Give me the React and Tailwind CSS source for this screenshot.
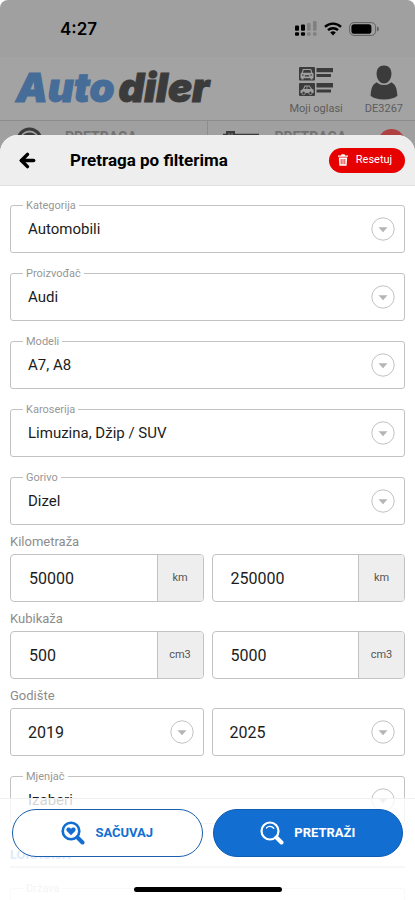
import { ArrowLeft } from "lucide-react";

const filters = [
  { id: "kategorija", label: "Kategorija", value: "Automobili" },
  { id: "proizvodjac", label: "Proizvođač", value: "Audi" },
  { id: "modeli", label: "Modeli", value: "A7, A8" },
  { id: "karoserija", label: "Karoserija", value: "Limuzina, Džip / SUV" },
  { id: "gorivo", label: "Gorivo", value: "Dizel" }
];

const ranges = [
  { id: "kilometraza", label: "Kilometraža", from: "50000", to: "250000", unit: "km" },
  { id: "kubikaza", label: "Kubikaža", from: "500", to: "5000", unit: "cm3" }
];

function StatusBar() {
  return (
    <div className="flex h-[57px] shrink-0 items-center justify-between pl-[60px] pr-9">
      <span className="font-['Inter',sans-serif] text-[17px] font-semibold leading-5 text-black">4:27</span>
      <div className="flex items-center gap-[7px]">
        <svg width="22" height="15" viewBox="0 0 22 15">
          <g fill="#000">
            <rect x="0" y="4.5" width="4" height="5.3" rx="1" />
            <rect x="6" y="3.5" width="4" height="6.3" rx="1" />
            <rect x="0" y="11.2" width="4" height="3.6" rx="1" />
            <rect x="6" y="11.2" width="4" height="3.6" rx="1" />
          </g>
          <g fill="#808080">
            <rect x="12" y="2" width="3.6" height="7.8" rx="1" />
            <rect x="18" y="0" width="3.6" height="9.8" rx="1" />
            <rect x="12" y="11.2" width="3.6" height="3.6" rx="1" />
            <rect x="18" y="11.2" width="3.6" height="3.6" rx="1" />
          </g>
        </svg>
        <svg width="18" height="14" viewBox="0 0 18 14" fill="none" stroke="#000" strokeWidth="2.4">
          <path d="M1 4.9a11.4 11.4 0 0 1 16 0" />
          <path d="M4 8.2a7.2 7.2 0 0 1 10 0" />
          <path d="M9 13.4 6.2 10.5a4 4 0 0 1 5.6 0z" fill="#000" stroke="none" />
        </svg>
        <svg width="30" height="14" viewBox="0 0 30 14">
          <rect x=".6" y=".6" width="26" height="12.8" rx="4.2" fill="none" stroke="#606060" />
          <rect x="2.4" y="2.3" width="20" height="9.4" rx="2.8" fill="#000" />
          <path d="M28 4.6c1.4.6 1.9 1.4 1.9 2.4s-.5 1.8-1.9 2.4z" fill="#606060" />
        </svg>
      </div>
    </div>
  );
}

function AdsIcon() {
  return (
    <svg width="36" height="30" viewBox="0 0 36 30">
      <g fill="#3b3b3b">
        <rect x="1" y="0" width="16" height="13.5" rx="1" />
        <rect x="1" y="16" width="16" height="13" rx="1" />
        <rect x="18.5" y="1" width="16.5" height="4.2" />
        <rect x="18.5" y="7" width="14.5" height="3" />
        <rect x="18.5" y="16" width="16.5" height="4.5" />
        <rect x="18.5" y="22.5" width="14.5" height="3" />
      </g>
      <path
        d="M4.900 2h8.200l1.300 3.700 1.100.9v4.600h-1v1.300h-2v-1.300h-7v1.300h-2v-1.300h-1V6.600l1.100-.9z"
        fill="#a0a0a0"
      />
      <g fill="#3b3b3b">
        <path d="M5.700 3h6.600l.9 2.700H4.800z" />
        <circle cx="4.900" cy="8" r=".8" />
        <circle cx="13.100" cy="8" r=".8" />
        <rect x="6.800" y="8.200" width="4.400" height="1.300" />
      </g>
      <path d="M2.500 23.400 5 22l1.700-3.600h4.800l2.400 3.400 1.700.9v3.300H2.500z" fill="#a0a0a0" />
      <g fill="#3b3b3b">
        <path d="M6.200 21.900 7.400 19.400h1.200v2.500zM9.400 19.400h1.700l1.600 2.500H9.400z" />
        <circle cx="5.600" cy="26" r="1.700" stroke="#a0a0a0" strokeWidth=".8" />
        <circle cx="12.400" cy="26" r="1.700" stroke="#a0a0a0" strokeWidth=".8" />
      </g>
    </svg>
  );
}

function UserIcon() {
  return (
    <svg width="28" height="35" viewBox="0 0 28 35" fill="#3b3b3b">
      <path d="M14 .5c4.600 0 7.400 3 7.400 8 0 5.500-3 10-7.400 10s-7.400-4.500-7.400-10c0-5 2.800-8 7.400-8z" />
      <path d="M7 17.200c1.900 1.700 4.200 2.500 7 2.500s5.100-.8 7-2.500c4 1.600 6 5.300 6.400 13.500C24.500 33.200 19.800 34.400 14 34.400S3.500 33.200.6 30.700C1 22.500 3 18.800 7 17.200z" />
      <path d="M6.800 16.600c1.700 2 4.200 3 7.200 3s5.500-1 7.200-3" fill="none" stroke="#a3a3a3" strokeWidth=".8" />
    </svg>
  );
}

function SiteHeader() {
  return (
    <header className="flex h-16 shrink-0 items-start justify-between border-b border-[#8d8d8d] bg-[#a3a3a3] pl-4 pr-3">
      <a href="#home" className="mt-[11px] flex gap-1 font-['Inter',sans-serif] text-[40px] font-black italic leading-10">
        <span className="text-[#466c98] [-webkit-text-stroke:1px_#466c98]">Auto</span>
        <span className="text-[#3b3b3b] [-webkit-text-stroke:1px_#3b3b3b]">diler</span>
      </a>
      <nav className="flex gap-[22px] font-['Roboto',sans-serif] text-[11px] leading-4 text-[#5c5c5c]">
        <a href="#oglasi" className="flex flex-col items-center pt-2.5">
          <AdsIcon />
          <span className="mt-1">Moji oglasi</span>
        </a>
        <a href="#profil" className="flex flex-col items-center pt-2">
          <UserIcon />
          <span className="mt-px">DE3267</span>
        </a>
      </nav>
    </header>
  );
}

function SearchTabs() {
  return (
    <div className="grid h-10 shrink-0 grid-cols-2 bg-[#a0a0a0] font-['Roboto',sans-serif] text-[14px] font-bold leading-5 text-[#727272]">
      <div className="flex items-start gap-[22px] border-r border-[#8d8d8d] pl-4 pt-1.5">
        <svg width="27" height="27" viewBox="0 0 27 27" fill="none" stroke="#3b3b3b">
          <circle cx="13.500" cy="13.500" r="11.500" strokeWidth="3" />
          <path d="M7 10a8 8 0 0 1 13 0" strokeWidth="2.500" />
        </svg>
        <span>PRETRAGA</span>
      </div>
      <div className="flex items-start pl-[15px] pr-2.5 pt-1.5">
        <svg className="mt-1" width="36" height="12" viewBox="0 0 36 12">
          <path d="M0 3.500h36" stroke="#3b3b3b" strokeWidth="1.500" />
          <rect x="3" y="0" width="9" height="8" fill="#3b3b3b" />
          <path d="M6 2v5M9 2v5" stroke="#888" />
        </svg>
        <span className="ml-4">PRETRAGA</span>
        <span className="ml-auto mt-0.5 size-[27px] rounded-full bg-[#b04142]" />
      </div>
    </div>
  );
}

function DropArrow() {
  return (
    <svg className="pointer-events-none absolute right-[9px] top-1/2 -translate-y-1/2" width="24" height="24" viewBox="0 0 24 24">
      <circle cx="12" cy="12" r="11.200" fill="none" stroke="#c2c2c2" />
      <path d="M7.500 10.300h9L12 15.300z" fill="#b5b5b5" />
    </svg>
  );
}

function SelectBox({ id, value, label, ariaLabel }) {
  return (
    <div className={`relative h-12 rounded-[3px] border border-[#c2c2c2] ${label ? "text-[15px]" : "text-base"}`}>
      {label ? (
        <label htmlFor={id} className="absolute -top-2 left-3 bg-white px-[3px] text-[11px] leading-4 text-[#979797]">
          {label}
        </label>
      ) : null}
      <select
        id={id}
        aria-label={ariaLabel}
        className="size-full appearance-none bg-transparent pl-[17px] pr-10 pt-px text-[#1c1c1c] outline-none"
      >
        <option>{value}</option>
      </select>
      <DropArrow />
    </div>
  );
}

function UnitInput({ label, value, unit }) {
  return (
    <div className="flex h-12 min-w-0 overflow-hidden rounded-[4px] border border-[#c2c2c2]">
      <input
        type="text"
        inputMode="numeric"
        aria-label={label}
        defaultValue={value}
        className="min-w-0 flex-1 pl-[18px] pt-px text-base text-[#1c1c1c] outline-none"
      />
      <span className="flex w-[46px] items-center justify-center border-l border-[#c2c2c2] bg-[#eee] pt-px text-[11px] text-[#555]">
        {unit}
      </span>
    </div>
  );
}

function RangeGroup({ label, children }) {
  return (
    <div role="group" aria-label={label}>
      <p className="pb-0.5 pt-[7px] text-[13px] leading-5 text-[#8c8c8c]">{label}</p>
      <div className="grid grid-cols-2 gap-2">{children}</div>
    </div>
  );
}

function SaveSearchIcon() {
  return (
    <svg width="24" height="24" viewBox="0 0 24 24">
      <circle cx="10" cy="10" r="8.300" fill="none" stroke="#126fd1" strokeWidth="2.600" />
      <path d="m16.500 16.500 5 5" stroke="#126fd1" strokeWidth="4" strokeLinecap="round" />
      <path d="M10 14.200 6 10.300C4.300 8.300 6.200 6 8.200 6.600c.9.300 1.500.8 1.800 1.400.3-.6.900-1.100 1.800-1.400 2-.6 3.900 1.700 2.200 3.700z" fill="#126fd1" />
    </svg>
  );
}

function SearchIcon() {
  return (
    <svg width="24" height="24" viewBox="0 0 24 24" fill="none" stroke="#fff">
      <circle cx="10" cy="10" r="8.500" strokeWidth="2.200" />
      <path d="M6.500 6.900c1.900-2.100 5.300-2 7.200.3" strokeWidth="1.400" strokeLinecap="round" />
      <path d="m16.500 16.500 5 5" strokeWidth="4" strokeLinecap="round" />
    </svg>
  );
}

function TrashIcon() {
  return (
    <svg width="10" height="12" viewBox="0 0 10 12">
      <path d="M0 1.500h3L3.500.3h3L7 1.500h3v1.200H0zM.8 3.500h8.400l-.6 8.200H1.400z" fill="#fff" />
      <path d="M3.200 5v5.200M5 5v5.200M6.800 5v5.200" stroke="#e60000" strokeWidth=".8" />
    </svg>
  );
}

export default function App() {
  return (
    <div className="bg-white">
      <div className="relative flex h-screen flex-col overflow-hidden rounded-t-lg bg-[#a0a0a0]">
        <StatusBar />
        <SiteHeader />
        <SearchTabs />

        <section className="relative -mt-[26px] flex min-h-0 flex-1 flex-col overflow-hidden rounded-t-[18px] bg-white font-['Roboto','Noto_Sans',sans-serif]">
          <div className="flex h-[51px] shrink-0 items-center border-b border-[#e0e0e0] bg-[#eee] pl-[17px] pr-2.5">
            <button type="button" aria-label="Nazad">
              <ArrowLeft size={21} strokeWidth={4} />
            </button>
            <h1 className="ml-8 text-[17px] font-bold leading-6 text-black">Pretraga po filterima</h1>
            <button
              type="button"
              className="ml-auto flex h-[25px] w-[76px] items-center justify-center gap-2 rounded-full bg-[#e60000] pr-1 text-[11px] text-white"
            >
              <TrashIcon />
              Resetuj
            </button>
          </div>

          <form className="min-h-0 flex-1 overflow-hidden px-2.5 pt-[19px]">
            <div className="flex flex-col gap-5">
              {filters.map((item) => (
                <SelectBox key={item.id} {...item} />
              ))}
            </div>

            {ranges.map((item) => (
              <RangeGroup key={item.id} label={item.label}>
                <UnitInput label={`${item.label} od`} value={item.from} unit={item.unit} />
                <UnitInput label={`${item.label} do`} value={item.to} unit={item.unit} />
              </RangeGroup>
            ))}

            <RangeGroup label="Godište">
              <SelectBox id="godiste-od" ariaLabel="Godište od" value="2019" />
              <SelectBox id="godiste-do" ariaLabel="Godište do" value="2025" />
            </RangeGroup>

            <div className="mt-5">
              <SelectBox id="mjenjac" label="Mjenjač" value="Izaberi" />
            </div>

            <h2 className="my-5 border-b-2 border-[#c2c2c2] text-[13px] font-bold leading-[22px] text-[#126fd1]">
              LOKACIJA
            </h2>
            <SelectBox id="drzava" label="Država" value="Izaberi" />
          </form>
        </section>

        <footer className="absolute inset-x-0 bottom-0 border-t border-[#f0f0f0] bg-linear-to-b from-white/80 to-white/90 px-3 pb-2 pt-2.5">
          <div className="grid grid-cols-2 gap-2.5 font-['Roboto',sans-serif] text-[13px] font-bold">
            <button
              type="button"
              className="flex h-12 items-center justify-center gap-2.5 rounded-full border border-[#1c5fae] bg-white text-[#126fd1]"
            >
              <SaveSearchIcon />
              SAČUVAJ
            </button>
            <button
              type="button"
              className="flex h-12 items-center justify-center gap-2.5 rounded-full border border-[#0c5db3] bg-[#126fd1] text-white"
            >
              <SearchIcon />
              PRETRAŽI
            </button>
          </div>
          <div className="mx-auto mt-[30px] h-[5px] w-[148px] rounded-full bg-black" />
        </footer>
      </div>
    </div>
  );
}
